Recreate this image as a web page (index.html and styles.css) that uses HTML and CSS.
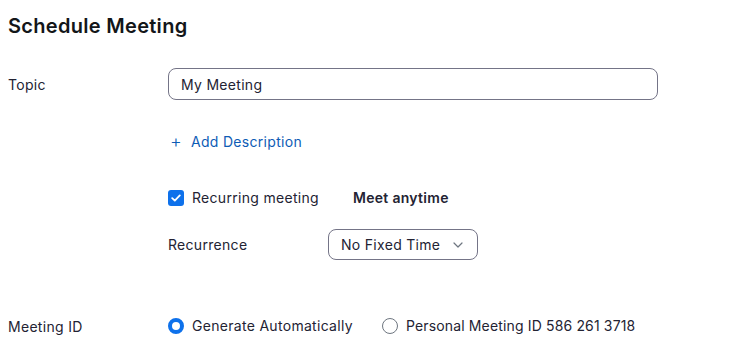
FILE: index.html
```html
<!DOCTYPE html>
<html lang="en">
<head>
    <meta charset="UTF-8">
    <meta name="viewport" content="width=device-width, initial-scale=1.0">
    <title>Schedule Meeting</title>
    <link rel="stylesheet" href="styles.css">
</head>
<body>
  <div class="schedule">
    <h1 class="schedule-title">Schedule Meeting</h1>

    <div class="form-row row-topic">
        <label class="form-label">Topic</label>
        <div class="form-field">
            <input class="text-input" type="text" value="My Meeting">
        </div>
    </div>

    <div class="form-row row-desc">
        <div class="form-label"></div>
        <div class="form-field">
            <a class="add-link" href="#"><span class="plus">+</span> Add Description</a>
        </div>
    </div>

    <div class="form-row row-recurring">
        <div class="form-label"></div>
        <div class="form-field check-line">
            <span class="checkbox">
                <svg width="10" height="8" viewBox="0 0 10 8"><path d="M1.2 4.2 L3.8 6.6 L8.8 1.4" fill="none" stroke="#fff" stroke-width="1.8" stroke-linecap="round" stroke-linejoin="round"/></svg>
            </span>
            <span class="check-text">Recurring meeting</span>
            <span class="anytime">Meet anytime</span>
        </div>
    </div>

    <div class="form-row row-recurrence">
        <div class="form-label"></div>
        <div class="form-field sub-row">
            <span class="sub-label">Recurrence</span>
            <div class="select">
                <span>No Fixed Time</span>
                <svg width="10" height="6" viewBox="0 0 10 6"><path d="M1 1 L5 5 L9 1" fill="none" stroke="#6e7680" stroke-width="1.2" stroke-linecap="round" stroke-linejoin="round"/></svg>
            </div>
        </div>
    </div>

    <div class="form-row row-meeting-id">
        <label class="form-label">Meeting ID</label>
        <div class="form-field radio-line">
            <span class="radio radio-on"></span>
            <span class="radio-text">Generate Automatically</span>
            <span class="radio"></span>
            <span class="radio-text pmi">Personal Meeting ID 586 261 3718</span>
        </div>
    </div>
  </div>
</body>
</html>
```

FILE: styles.css
```css
* {
    margin: 0;
    padding: 0;
    box-sizing: border-box;
}

body {
    font-family: Inter, "Noto Sans", Arial, sans-serif;
    background-color: #ffffff;
    color: #232333;
    font-size: 14px;
    letter-spacing: 0.3px;
}

.schedule {
    padding: 13px 8px 0 8px;
}

.schedule-title {
    font-size: 20px;
    font-weight: 600;
    line-height: 26px;
    color: #131619;
}

.form-row {
    display: flex;
    align-items: center;
}

.form-label {
    width: 160px;
    flex-shrink: 0;
}

.form-field {
    flex: 1;
}

.row-topic {
    margin-top: 29px;
}

.text-input {
    width: 490px;
    height: 32px;
    border: 1px solid #747487;
    border-radius: 8px;
    padding: 0 12px;
    font-family: inherit;
    font-size: 14px;
    letter-spacing: 0.3px;
    color: #232333;
    outline: none;
}

.row-desc {
    margin-top: 32px;
}

.add-link {
    color: #0e5cb5;
    text-decoration: none;
    font-size: 14px;
    line-height: 20px;
    display: inline-flex;
    align-items: center;
}

.plus {
    font-size: 18px;
    font-weight: 300;
    width: 23px;
    padding-left: 2px;
}

.row-recurring {
    margin-top: 36px;
}

.check-line {
    display: flex;
    align-items: center;
    line-height: 20px;
}

.checkbox {
    width: 16px;
    height: 16px;
    border-radius: 3px;
    background: #0e71eb;
    display: flex;
    align-items: center;
    justify-content: center;
    margin-right: 8px;
}

.anytime {
    font-weight: 600;
    margin-left: 34px;
}

.row-recurrence {
    margin-top: 21px;
}

.sub-row {
    display: flex;
    align-items: center;
}

.sub-label {
    width: 160px;
}

.select {
    width: 150px;
    height: 31px;
    border: 1px solid #747487;
    border-radius: 8px;
    padding: 0 14px 0 12px;
    display: flex;
    align-items: center;
    justify-content: space-between;
}

.row-meeting-id {
    margin-top: 56px;
}

.radio-line {
    display: flex;
    align-items: center;
    line-height: 20px;
}

.radio {
    width: 16px;
    height: 16px;
    border-radius: 50%;
    border: 1px solid #6e7680;
    margin-right: 8px;
}

.radio-on {
    border: 4px solid #0e71eb;
}

.radio-text {
    margin-right: 29px;
}

.pmi {
    letter-spacing: 0.15px;
}
```
